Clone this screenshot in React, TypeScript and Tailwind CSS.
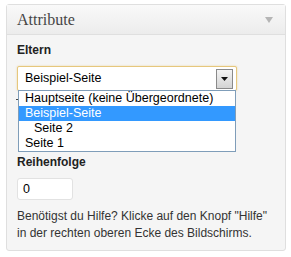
const sans = { fontFamily: '"Liberation Sans", Arial, sans-serif' };

const pages = [
  { label: 'Hauptseite (keine Übergeordnete)', depth: 0 },
  { label: 'Beispiel-Seite', depth: 0, active: true },
  { label: 'Seite 2', depth: 1 },
  { label: 'Seite 1', depth: 0 },
];

function SelectArrow() {
  return (
    <div className="flex h-[20px] w-[17px] items-center justify-center border border-[#8a8a8a] bg-gradient-to-b from-[#f4f4f4] to-[#d4d4d4]">
      <svg width="7" height="4" viewBox="0 0 7 4">
        <path d="M0 0h7L3.5 4z" fill="#111" />
      </svg>
    </div>
  );
}

export default function App() {
  return (
    <div className="min-h-[257px] w-[291px] bg-white pt-[4px] pl-[6px] text-[#333]" style={sans}>
      <div className="w-[280px] rounded-[3px] border border-[#dfdfdf] bg-[#f5f5f5]">
        <div className="flex h-[30px] items-center justify-between border-b border-[#dfdfdf] bg-gradient-to-b from-[#f9f9f9] to-[#ececec] pl-[10px] pr-[12px]">
          <span className="text-[16px] text-[#464646]" style={{ fontFamily: '"Liberation Serif", Georgia, serif' }}>
            Attribute
          </span>
          <svg width="8" height="6" viewBox="0 0 8 6">
            <path d="M0 0h8L4 6z" fill="#b5b5b5" />
          </svg>
        </div>

        <div className="px-[10px] pt-[7px] pb-[8px]">
          <div className="text-[12px] font-bold leading-[16px] text-[#222]">Eltern</div>

          <div className="relative mt-[8px]">
            <div className="flex h-[25px] w-[220px] items-center justify-between rounded-[2px] border border-[#e6c77d] bg-white pl-[7px] pr-[3px] shadow-[0_0_2px_rgba(230,190,100,0.6)]">
              <span className="text-[12.5px] text-black">Beispiel-Seite</span>
              <SelectArrow />
            </div>

            <div className="absolute top-[24px] left-[1px] z-10 w-[218px] border border-[#7f9db9] bg-white text-[12.5px] leading-[15px] text-black">
              {pages.map((p) => (
                <div
                  key={p.label}
                  className={p.active ? 'bg-[#3399ff] text-white' : ''}
                  style={{ paddingLeft: 6 + p.depth * 9 }}
                >
                  {p.label}
                </div>
              ))}
            </div>

            {/* covered by the open list, only a sliver shows */}
            <div className="relative h-[54px]">
              <div className="absolute top-[8px] left-[-1px] h-[1px] w-[3px] bg-[#444]" />
            </div>
          </div>

          <div className="mt-[9px] text-[12px] font-bold leading-[16px] text-[#222]">Reihenfolge</div>
          <div className="mt-[8px] flex h-[22px] w-[56px] items-center rounded-[3px] border border-[#e2e2e2] bg-white pl-[5px] text-[12.5px] text-black">
            0
          </div>
          <p className="mt-[8px] text-[12px] leading-[17px] text-[#333]">
            Benötigst du Hilfe? Klicke auf den Knopf "Hilfe" in der rechten oberen Ecke des Bildschirms.
          </p>
        </div>
      </div>
    </div>
  );
}
